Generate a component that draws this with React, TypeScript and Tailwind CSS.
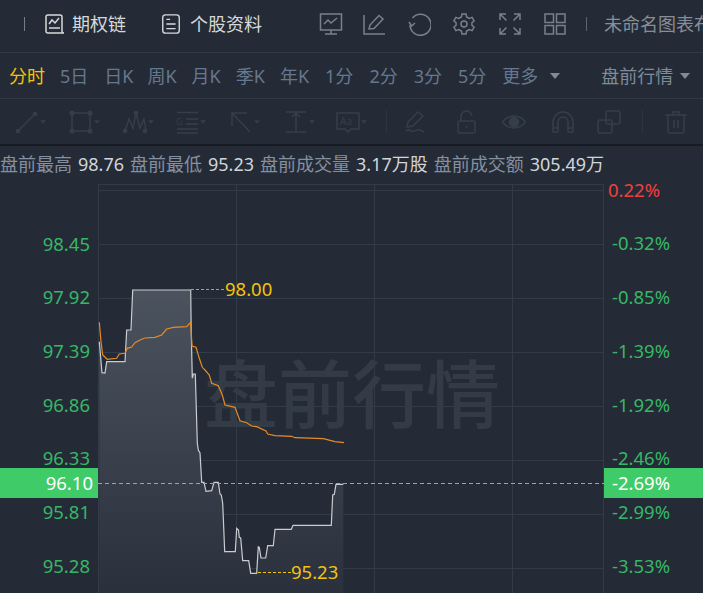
const FONT = "font-['Noto_Sans','Noto_Sans_CJK_SC',sans-serif]";

const PERIODS = [
  { label: '分时', className: 'ml-[9px] text-[#f2c40f]' },
  { label: '5日', className: 'ml-[15px]' },
  { label: '日K', className: 'ml-[16px]' },
  { label: '周K', className: 'ml-[14px]' },
  { label: '月K', className: 'ml-[15px]' },
  { label: '季K', className: 'ml-[15px]' },
  { label: '年K', className: 'ml-[15px]' },
  { label: '1分', className: 'ml-[16px]' },
  { label: '2分', className: 'ml-[16px]' },
  { label: '3分', className: 'ml-[16px]' },
  { label: '5分', className: 'ml-[16px]' },
];

const LEFT_PRICES = ['98.45', '97.92', '97.39', '96.86', '96.33', '95.81', '95.28'];
const RIGHT_PCTS = ['-0.32%', '-0.85%', '-1.39%', '-1.92%', '-2.46%', '-2.99%', '-3.53%'];

// coordinates are relative to the chart svg, which starts at x=98 y=184
const toPath = (pts: number[][]) => pts.map((p) => `${(p[0] - 98).toFixed(1)},${(p[1] - 184).toFixed(1)}`).join(' ');

const WHITE_LINE = [
  [99.3, 341.7], [102, 372.7], [105, 373], [106.7, 361.7], [125, 361.7], [126.7, 330], [131, 330], [132.7, 290],
  [190.7, 290], [191.2, 330], [192.3, 378], [193.3, 374], [195.3, 374], [197.3, 443], [198.3, 450], [200, 453],
  [201.7, 482.3], [204, 482.3], [206, 491.3], [211.7, 490.7], [214, 482.3], [218.3, 482.3], [220, 494], [221.3, 495],
  [222.7, 503.3], [224.7, 551.7], [235.3, 551.7], [236.7, 528.3], [238.5, 530], [239.3, 537.3], [240.7, 538],
  [242.7, 560.7], [248.7, 560.7], [250.7, 573.3], [256.7, 573.3], [258.3, 546.7], [259.3, 547.3], [261, 558],
  [265.7, 558], [267.7, 545.7], [273.3, 545.7], [275, 529.3], [291.3, 529.3], [293, 525.3], [331.3, 525.3],
  [332.7, 495], [334.3, 494.3], [336, 484.3], [343.3, 484.3],
];

const ORANGE_LINE = [
  [99.3, 322.3], [101, 341.7], [102.7, 355], [107.3, 359.3], [116.7, 358.3], [119.3, 354], [125, 353.3], [127.3, 348.3],
  [131.7, 347], [135, 342.7], [140, 340], [145, 338], [155, 337.3], [161.7, 335], [166.7, 329], [173.3, 327.3],
  [186.7, 326.7], [190.7, 322.3], [192, 346], [196, 347.3], [199.3, 358.3], [202.3, 367.3], [205, 370], [209.3, 375],
  [211.7, 383.3], [218.3, 385.7], [222.3, 395], [225, 405], [235, 407.3], [240, 420.7], [246.7, 422.7], [251.7, 426],
  [256.7, 426.7], [266, 431], [267.7, 434], [275, 435.7], [291.7, 436.3], [295, 437.7], [323.3, 438.7], [335, 441.7],
  [344, 442.7],
];

function Caret({ className }: { className: string }) {
  return (
    <svg viewBox="0 0 10 6" className={className} fill="currentColor">
      <path d="M0 0h10L5 6z" />
    </svg>
  );
}

function TopIcon({ className, children }: { className: string; children: React.ReactNode }) {
  return (
    <svg viewBox="0 0 24 24" fill="none" stroke="currentColor" strokeWidth="1.5" className={className}>
      {children}
    </svg>
  );
}

function ToolIcon({ className, children }: { className: string; children: React.ReactNode }) {
  return (
    <svg viewBox="0 0 24 24" fill="none" stroke="currentColor" strokeWidth="1.5" className={`h-[24px] w-[24px] shrink-0 text-[#353f4b] ${className}`}>
      {children}
    </svg>
  );
}

function ToolCaret() {
  return <Caret className="ml-[1px] h-[4px] w-[6px] shrink-0 text-[#353f4b]" />;
}

export default function App() {
  return (
    <div className={`h-[593px] w-[703px] overflow-hidden bg-[#242b36] ${FONT}`}>
      {/* top bar */}
      <div className="flex h-[53px] items-center border-b border-[#2f3a47] pb-[5px] text-[18px] leading-none whitespace-nowrap">
        <span className="ml-[24px] h-[14px] w-px shrink-0 bg-[#77808a]" />
        <TopIcon className="ml-[18px] h-[24px] w-[24px] shrink-0 text-[#d6d9dc]">
          <path d="M3 19V5a2 2 0 0 1 2-2h12a2 2 0 0 1 2 2v14a2 2 0 0 0 2 2H5a2 2 0 0 1-2-2z" />
          <path d="M6 12l3-4 3 3 4-5" />
          <path d="M6 16h11" />
        </TopIcon>
        <span className="ml-[5px] shrink-0 text-[#d6d9dc]">期权链</span>
        <TopIcon className="ml-[34px] h-[22px] w-[22px] shrink-0 text-[#d6d9dc]">
          <rect x="3" y="2" width="18" height="20" rx="3" />
          <path d="M7 7h4M7 12h10M7 17h10" />
        </TopIcon>
        <span className="ml-[8px] shrink-0 text-[#d6d9dc]">个股资料</span>
        <TopIcon className="ml-[57px] h-[24px] w-[24px] shrink-0 text-[#77818c]">
          <rect x="1.5" y="2" width="21" height="16" />
          <path d="M5 12l4-4 3 3 6-5M12 18v4M6 22h12" />
        </TopIcon>
        <TopIcon className="ml-[19px] h-[24px] w-[24px] shrink-0 text-[#77818c]">
          <path d="M2 3v19h21" />
          <path d="M7 17l1-4L17 3.5l4 3.5-9 9.5z" />
        </TopIcon>
        <TopIcon className="ml-[21px] h-[24px] w-[24px] shrink-0 text-[#77818c]">
          <path d="M5.5 6A10.5 10.5 0 1 1 3 13" />
          <path d="M2 10l2.5 4 3.5-3" />
        </TopIcon>
        <TopIcon className="ml-[21px] h-[24px] w-[24px] shrink-0 text-[#77818c]">
          <path d="M10 2h4l.6 3 2.6 1.4 2.9-1 2 3.4-2.2 2v2.4l2.2 2-2 3.4-2.9-1-2.6 1.4-.6 3h-4l-.6-3-2.6-1.4-2.9 1-2-3.4 2.2-2v-2.4l-2.2-2 2-3.4 2.9 1L9.4 5z" />
          <circle cx="12" cy="12" r="3" />
        </TopIcon>
        <TopIcon className="ml-[22px] h-[24px] w-[24px] shrink-0 text-[#77818c]">
          <path d="M2 8V2h6M22 8V2h-6M2 16v6h6M22 16v6h-6M2.5 2.5l6 6M21.5 2.5l-6 6M2.5 21.5l6-6M21.5 21.5l-6-6" />
        </TopIcon>
        <TopIcon className="ml-[21px] h-[24px] w-[24px] shrink-0 text-[#77818c]">
          <rect x="2" y="2" width="8.5" height="8.5" />
          <rect x="13.5" y="2" width="8.5" height="8.5" />
          <rect x="2" y="13.5" width="8.5" height="8.5" />
          <rect x="13.5" y="13.5" width="8.5" height="8.5" />
        </TopIcon>
        <span className="ml-[19px] h-[14px] w-px shrink-0 bg-[#5e6772]" />
        <span className="ml-[17px] shrink-0 text-[#868e98]">未命名图表布局</span>
      </div>

      {/* periods */}
      <div className="flex h-[46px] items-center border-b border-[#2f3a47] text-[18px] leading-none text-[#66788f]">
        {PERIODS.map((p) => (
          <span key={p.label} className={`whitespace-nowrap ${p.className}`}>
            {p.label}
          </span>
        ))}
        <span className="ml-[16px]">更多</span>
        <Caret className="ml-[12px] h-[6px] w-[10px] shrink-0 text-[#7f8b99]" />
        <span className="ml-[41px] text-[#7f8b99]">盘前行情</span>
        <Caret className="ml-[7px] h-[6px] w-[10px] shrink-0 text-[#7f8b99]" />
      </div>

      {/* drawing tools */}
      <div className="flex h-[45px] items-center">
        <ToolIcon className="ml-[15px]">
          <path d="M3 21L20 4" />
          <circle cx="3" cy="21" r="1.6" fill="currentColor" />
          <circle cx="20" cy="4" r="1.6" fill="currentColor" />
        </ToolIcon>
        <ToolCaret />
        <ToolIcon className="ml-[23px]">
          <rect x="3" y="3" width="18" height="18" />
          <g fill="currentColor">
            <circle cx="3" cy="3" r="1.8" />
            <circle cx="21" cy="3" r="1.8" />
            <circle cx="3" cy="21" r="1.8" />
            <circle cx="21" cy="21" r="1.8" />
          </g>
        </ToolIcon>
        <ToolCaret />
        <ToolIcon className="ml-[23px]">
          <path d="M2 21l4-12 4 9 3-15 4 15 4-9 2 12" />
          <g fill="currentColor">
            <circle cx="2" cy="21" r="1.6" />
            <circle cx="13" cy="3" r="1.6" />
            <circle cx="22" cy="21" r="1.6" />
          </g>
        </ToolIcon>
        <ToolCaret />
        <ToolIcon className="ml-[21px]">
          <path d="M2 2.5h21M11 9h12M11 14h12M2 19h21M2 23h21" />
          <text x="1" y="15" fontSize="9" fill="currentColor" stroke="none">G</text>
        </ToolIcon>
        <ToolCaret />
        <ToolIcon className="ml-[23px]">
          <path d="M21 22L3 3M3 16V3h15" />
        </ToolIcon>
        <ToolCaret />
        <ToolIcon className="ml-[24px]">
          <path d="M2 2h20M2 22h20M12 3v18M8 7l4-4 4 4" />
        </ToolIcon>
        <ToolCaret />
        <ToolIcon className="ml-[21px]">
          <path d="M1 3h22v16h-8l-3 3-3-3H1z" />
          <text x="4" y="15" fontSize="10" fill="currentColor" stroke="none">Aa</text>
        </ToolIcon>
        <ToolCaret />
        <span className="ml-[19px] h-[24px] w-px shrink-0 bg-[#2c3540]" />
        <ToolIcon className="ml-[17px]">
          <path d="M3 17l1-5L14 2l5 4L9 16zM2 21c4-3 6 2 9 0s4-2 9 1" />
        </ToolIcon>
        <ToolIcon className="ml-[26px]">
          <rect x="4" y="11" width="17" height="12" rx="2" />
          <path d="M7 11V7a5.5 5.5 0 0 1 11-1M12.5 16v2.5" />
        </ToolIcon>
        <ToolIcon className="ml-[24px]">
          <path d="M0.5 12C6 4 18 4 23.5 12 18 20 6 20 .5 12z" />
          <circle cx="12" cy="12" r="4.5" fill="currentColor" />
        </ToolIcon>
        <ToolIcon className="ml-[25px]">
          <path d="M2 22v-10a10 10 0 0 1 20 0v10h-5V12a5 5 0 0 0-10 0v10zM2 18h5M17 18h5" />
        </ToolIcon>
        <ToolIcon className="ml-[22px]">
          <rect x="9" y="1" width="14" height="13" rx="2" />
          <rect x="1" y="10" width="14" height="13" rx="2" />
        </ToolIcon>
        <span className="ml-[21px] h-[24px] w-px shrink-0 bg-[#2c3540]" />
        <ToolIcon className="ml-[21px]">
          <path d="M1 5h22M9 5V2h6v3M4 5v16a2 2 0 0 0 2 2h12a2 2 0 0 0 2-2V5M10 10v8M14 10v8" />
        </ToolIcon>
      </div>

      {/* summary */}
      <div className="flex h-[40px] items-center gap-[6px] border-t-2 border-[#171c23] pb-[2px] text-[18px] leading-none whitespace-nowrap">
        <span className="text-[#8490a0]">盘前最高</span>
        <span className="text-[#d2d5d9]">98.76</span>
        <span className="text-[#8490a0]">盘前最低</span>
        <span className="text-[#d2d5d9]">95.23</span>
        <span className="text-[#8490a0]">盘前成交量</span>
        <span className="text-[#d2d5d9]">3.17万股</span>
        <span className="text-[#8490a0]">盘前成交额</span>
        <span className="text-[#d2d5d9]">305.49万</span>
      </div>

      {/* chart */}
      <div className="relative flex h-[409px] text-[18.5px] leading-none">
        {/* watermark */}
        <div className="pointer-events-none absolute left-[204px] top-[173px] text-[74px] font-medium leading-none whitespace-nowrap text-[#333b46]">
          盘前行情
        </div>

        <div className="flex w-[98px] shrink-0 flex-col pt-[33px] text-[#36b766]">
          {LEFT_PRICES.map((v) => (
            <div key={v} className="flex h-[54px] items-center justify-end pr-[8px]">
              {v}
            </div>
          ))}
        </div>
        <svg viewBox="0 0 506 409" className="relative h-[409px] w-[506px] shrink-0" fill="none">
          <defs>
            <linearGradient id="area" x1="0" y1="0" x2="0" y2="1">
              <stop offset="0" stopColor="#4b535e" />
              <stop offset="1" stopColor="#2a313c" />
            </linearGradient>
          </defs>
          <g stroke="#323c48" strokeWidth="1">
            <path d="M0 .5H505M0 6.5H505M0 60.5H505M0 114.5H505M0 168.5H505M0 222.5H505M0 276.5H505M0 330.5H505M0 384.5H505" />
            <path d="M.5 0V409M138.5 0V409M276.5 0V409M414.5 0V409M505.5 0V409" />
          </g>
          <polygon points={`${toPath(WHITE_LINE)} 245.3,409 1.3,409`} fill="url(#area)" />
          <polyline points={toPath(WHITE_LINE)} stroke="#c9ccd0" strokeWidth="1.2" />
          <polyline points={toPath(ORANGE_LINE)} stroke="#e88a24" strokeWidth="1.2" />
          <path d="M93 105.5H127" stroke="#f2c40f" strokeWidth="1" strokeDasharray="3 2" opacity="0.8" />
          <path d="M160 388.5H193" stroke="#f2c40f" strokeWidth="1" strokeDasharray="3 2" />
          <path d="M0 299.5H506" stroke="#7fb79a" strokeWidth="1" strokeDasharray="4 3" />
          <text x="127" y="111.5" fontSize="18.5" fill="#f2c40f">98.00</text>
          <text x="193" y="394.5" fontSize="18.5" fill="#f2c40f">95.23</text>
        </svg>
        <div className="-mt-[21px] flex flex-1 flex-col pl-[8px] text-[#36b766]">
          <div className="-ml-[4px] flex h-[54px] items-center text-[#f03f3f]">0.22%</div>
          {RIGHT_PCTS.map((v) => (
            <div key={v} className="flex h-[54px] items-center">
              {v}
            </div>
          ))}
        </div>

        {/* current price tags */}
        <div className="absolute left-0 top-[284px] flex h-[30px] w-[98px] items-center justify-end bg-[#3ecb68] pr-[5px] text-white">
          96.10
        </div>
        <div className="absolute left-[604px] top-[284px] flex h-[30px] w-[99px] items-center bg-[#3ecb68] pl-[8px] text-white">
          -2.69%
        </div>
      </div>
    </div>
  );
}
